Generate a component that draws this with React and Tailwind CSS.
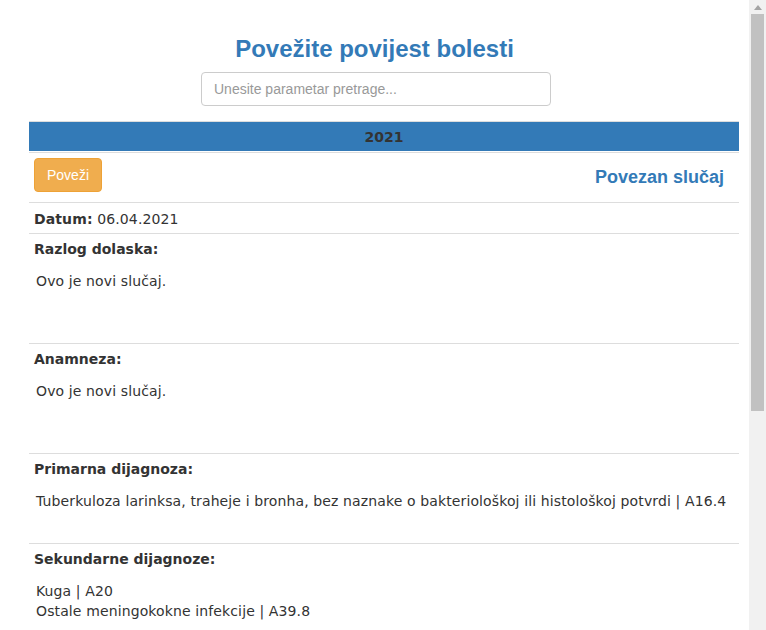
import React from 'react';

const sections = [
  { label: 'Razlog dolaska:', lines: ['Ovo je novi slučaj.'], pad: 'pb-[52px]' },
  { label: 'Anamneza:', lines: ['Ovo je novi slučaj.'], pad: 'pb-[52px]' },
  {
    label: 'Primarna dijagnoza:',
    lines: ['Tuberkuloza larinksa, traheje i bronha, bez naznake o bakteriološkoj ili histološkoj potvrdi | A16.4'],
    pad: 'pb-[32px]',
  },
  {
    label: 'Sekundarne dijagnoze:',
    lines: ['Kuga | A20', 'Ostale meningokokne infekcije | A39.8'],
    pad: 'pb-[32px]',
  },
];

function Scrollbar() {
  return (
    <div className="w-[17px] h-full bg-[#f1f1f1] flex flex-col shrink-0">
      {/* up arrow */}
      <div className="h-[14px] flex items-center justify-center">
        <svg width="8" height="5" viewBox="0 0 8 5">
          <path d="M0 5 L4 0 L8 5 Z" fill="#a3a3a3" />
        </svg>
      </div>
      <div className="ml-[2px] w-[13px] h-[397px] bg-[#c1c1c1]" />
    </div>
  );
}

export default function App() {
  return (
    <div className="flex w-[766px] h-[630px] overflow-hidden bg-white text-[#333]">
      <div className="flex-1 min-w-0 font-['DejaVu_Sans',Verdana,sans-serif] text-[14px] leading-5">
        {/* Header */}
        <h3 className="pt-[36px] text-center font-['Liberation_Sans',Arial,sans-serif] text-[24px] leading-[26.4px] font-bold text-[#337ab7]">
          Povežite povijest bolesti
        </h3>
        <input
          type="text"
          placeholder="Unesite parametar pretrage..."
          className="block mt-[10px] ml-[201px] w-[350px] h-[34px] px-3 rounded-[4px] border border-[#ccc] font-['Liberation_Sans',Arial,sans-serif] text-[14px] text-[#555] placeholder:text-[#999] outline-none"
        />

        {/* Case */}
        <div className="ml-[29px] w-[710px] mt-[15px]">
          <div className="border-t border-[#ddd]">
            <div className="h-[29px] bg-[#337ab7] flex items-center justify-center font-bold text-[14px] text-[#333]">
              2021
            </div>
          </div>

          <div className="mt-[1px] border-t border-[#ddd] flex items-start justify-between pl-[5px] pr-[15px] pt-[5px] pb-[10px]">
            <button className="h-[34px] px-3 rounded-[4px] bg-[#f0ad4e] border border-[#eea236] text-white font-['Liberation_Sans',Arial,sans-serif] text-[14px]">
              Poveži
            </button>
            <h4 className="mt-[9px] font-['Liberation_Sans',Arial,sans-serif] text-[18px] leading-5 font-bold text-[#337ab7]">
              Povezan slučaj
            </h4>
          </div>

          <div className="border-t border-[#ddd] pl-[5px] pt-[6px] pb-[4px] tracking-[0.12px]">
            <span className="font-bold">Datum:</span> 06.04.2021
          </div>

          {sections.map((s) => (
            <div key={s.label} className={`border-t border-[#ddd] pt-[5px] ${s.pad}`}>
              <div className="pl-[5px] font-bold">{s.label}</div>
              <div className="mt-3 pl-[7px] tracking-[0.12px]">
                {s.lines.map((l) => (
                  <div key={l}>{l}</div>
                ))}
              </div>
            </div>
          ))}
        </div>
      </div>
      <Scrollbar />
    </div>
  );
}
